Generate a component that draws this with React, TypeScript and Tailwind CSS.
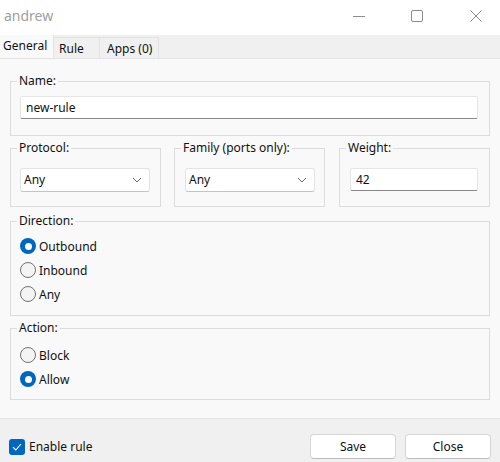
import React from "react";

function Radio({ checked, label }: { checked?: boolean; label: string }) {
  return (
    <div className="flex items-center h-[24px] gap-[3px]">
      {checked ? (
        <span className="w-[16px] h-[16px] rounded-full bg-[#0067c0] flex items-center justify-center">
          <span className="w-[7px] h-[7px] rounded-full bg-white" />
        </span>
      ) : (
        <span className="w-[16px] h-[16px] rounded-full border border-[#737373] bg-[#f4f4f4]" />
      )}
      <span className="pt-[1px]">{label}</span>
    </div>
  );
}

function Chevron() {
  return (
    <svg width="10" height="6" viewBox="0 0 10 6" className="shrink-0">
      <path d="M1 1 L5 5 L9 1" fill="none" stroke="#6b6b6b" strokeWidth="1" />
    </svg>
  );
}

function Select({ value }: { value: string }) {
  return (
    <div className="w-[130px] h-[24px] bg-white border border-[#e3e3e3] border-b-[#c4c4c4] rounded-[3px] flex items-center justify-between pl-[3px] pr-[7px]">
      <span>{value}</span>
      <Chevron />
    </div>
  );
}

function TextInput({ value, w }: { value: string; w: string }) {
  return (
    <div className={`${w} h-[23px] bg-white border border-[#e5e5e5] border-b-[#868686] rounded-[2px] flex items-center pl-[5px]`}>
      <span>{value}</span>
    </div>
  );
}

export default function App() {
  return (
    <div className="w-[500px] h-[462px] flex flex-col text-[12px] leading-[16px] text-[#111111] font-['Segoe_UI','Noto_Sans',sans-serif] overflow-hidden">
      {/* title bar */}
      <div className="h-[35px] bg-white flex items-center shrink-0">
        <span className="pl-[4px] text-[14px] text-[#a0a0a0] -mt-[3px]">andrew</span>
        <div className="ml-auto flex items-center h-full gap-[46px] pr-[18px]">
          <svg width="12" height="12" viewBox="0 0 12 12" className="-mt-[2px]">
            <path d="M0 5.5 H12" stroke="#8c8c8c" strokeWidth="1" />
          </svg>
          <svg width="12" height="12" viewBox="0 0 12 12" className="-mt-[3px]">
            <rect x="0.5" y="0.5" width="11" height="11" rx="1.5" fill="none" stroke="#8c8c8c" strokeWidth="1" />
          </svg>
          <svg width="12" height="12" viewBox="0 0 12 12" className="-mt-[3px] ml-[1px]">
            <path d="M0.5 0.5 L11.5 11.5 M11.5 0.5 L0.5 11.5" stroke="#8c8c8c" strokeWidth="1" />
          </svg>
        </div>
      </div>

      {/* tab strip */}
      <div className="h-[23px] bg-[#f0f0f0] flex items-end shrink-0">
        <div className="h-[23px] w-[54px] bg-[#f9f9f9] border-r border-[#e3e3e3] pl-[3px] pt-[3px]">General</div>
        <div className="h-[21px] w-[46px] bg-[#f0f0f0] border-t border-r border-[#e3e3e3] pl-[5px] pt-[3px]">Rule</div>
        <div className="h-[21px] w-[59px] bg-[#f0f0f0] border-t border-r border-[#e3e3e3] pl-[7px] pt-[3px]">Apps (0)</div>
      </div>

      {/* panel */}
      <div className="h-[361px] bg-[#f9f9f9] border-t border-b border-[#e3e3e3] px-[10px] shrink-0">
        <fieldset className="mt-[14px] border border-[#dcdcdc] pb-[16px]">
          <legend className="ml-[6px] px-[2px] h-[16px]">Name:</legend>
          <div className="pt-[7px] pl-[9px]">
            <TextInput value="new-rule" w="w-[458px]" />
          </div>
        </fieldset>

        <div className="mt-[4px] flex justify-between">
          <fieldset className="w-[151px] border border-[#dcdcdc] pb-[14px]">
            <legend className="ml-[6px] px-[2px] h-[16px]">Protocol:</legend>
            <div className="pt-[12px] pl-[9px]">
              <Select value="Any" />
            </div>
          </fieldset>
          <fieldset className="w-[151px] ml-[13px] border border-[#dcdcdc] pb-[14px]">
            <legend className="ml-[6px] px-[2px] h-[16px]">Family (ports only):</legend>
            <div className="pt-[12px] pl-[10px]">
              <Select value="Any" />
            </div>
          </fieldset>
          <fieldset className="w-[151px] ml-[14px] border border-[#dcdcdc] pb-[14px]">
            <legend className="ml-[6px] px-[2px] h-[16px]">Weight:</legend>
            <div className="pt-[12px] pl-[10px]">
              <TextInput value="42" w="w-[128px]" />
            </div>
          </fieldset>
        </div>

        <fieldset className="mt-[6px] border border-[#dcdcdc] pb-[9px]">
          <legend className="ml-[6px] px-[2px] h-[16px]">Direction:</legend>
          <div className="pt-[5px] pl-[9px]">
            <Radio checked label="Outbound" />
            <Radio label="Inbound" />
            <Radio label="Any" />
          </div>
        </fieldset>

        <fieldset className="mt-[4px] border border-[#dcdcdc] pb-[8px]">
          <legend className="ml-[6px] px-[2px] h-[16px]">Action:</legend>
          <div className="pt-[7px] pl-[9px]">
            <Radio label="Block" />
            <Radio checked label="Allow" />
          </div>
        </fieldset>
      </div>

      {/* footer */}
      <div className="flex-1 bg-[#f0f0f0] flex items-start pt-[15px] pl-[9px] pr-[9px]">
        <div className="flex items-center gap-[4px] mt-[4px]">
          <span className="w-[16px] h-[16px] rounded-[3px] bg-[#0067c0] flex items-center justify-center">
            <svg width="10" height="8" viewBox="0 0 10 8">
              <path d="M1 4.2 L3.8 7 L9 1" fill="none" stroke="white" strokeWidth="1.1" />
            </svg>
          </span>
          <span className="pt-[1px]">Enable rule</span>
        </div>
        <div className="ml-auto flex gap-[9px]">
          <div className="w-[86px] h-[25px] bg-white border border-[#d6d6d6] border-b-[#bdbdbd] rounded-[4px] flex items-center justify-center">Save</div>
          <div className="w-[86px] h-[25px] bg-white border border-[#d6d6d6] border-b-[#bdbdbd] rounded-[4px] flex items-center justify-center">Close</div>
        </div>
      </div>
    </div>
  );
}
